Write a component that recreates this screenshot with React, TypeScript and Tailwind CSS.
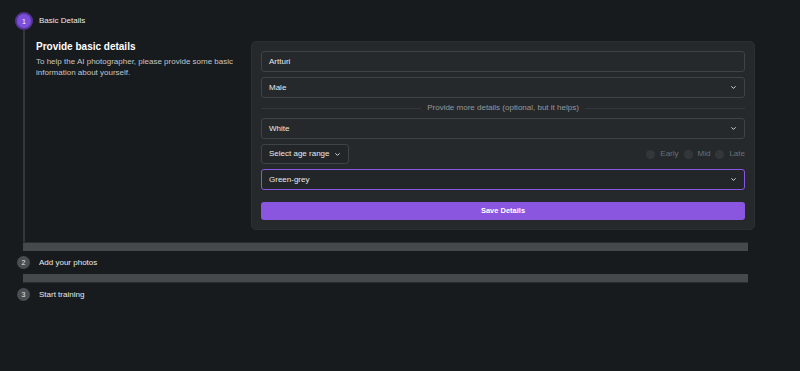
import React from "react";

function Chevron() {
  return (
    <svg width="5" height="3" viewBox="0 0 5 3" className="shrink-0">
      <polyline points="0.7,0.6 2.5,2.4 4.3,0.6" fill="none" stroke="#d6d8da" strokeWidth="1" strokeLinecap="round" strokeLinejoin="round" />
    </svg>
  );
}

function Radio({ label }: { label: string }) {
  return (
    <div className="flex items-center gap-[5px]">
      <div className="w-[9px] h-[9px] rounded-full bg-[#34373a]" />
      <span className="text-[8px] leading-none text-[#6c6f72]">{label}</span>
    </div>
  );
}

export default function App() {
  return (
    <div className="w-[800px] h-[371px] bg-[#181b1e] pt-[12px] font-['Liberation_Sans',Arial,sans-serif] text-[#e6e7e8] overflow-hidden">
      {/* Step 1 header */}
      <div className="flex items-center h-[18px] pl-[15px]">
        <div className="w-[18px] h-[18px] rounded-full bg-[#7b4fd9] border-2 border-[#553496] flex items-center justify-center text-[7px] text-white leading-none">
          1
        </div>
        <span className="ml-[6px] text-[8px] leading-none text-[#e8e9ea]">Basic Details</span>
      </div>

      {/* Step 1 content */}
      <div className="ml-[23px] border-l-2 border-[#33363a] pl-[11px] pt-[11px] pb-[12px] flex">
        <div className="w-[204px]">
          <div className="text-[10px] font-bold leading-[12px] text-white">Provide basic details</div>
          <div className="mt-[3px] text-[8px] leading-[11px] text-[#c3c5c7] w-[204px]">
            To help the AI photographer, please provide some basic information about yourself.
          </div>
        </div>
        <div className="ml-[11px] w-[504px] rounded-[5px] bg-[#26292c] border border-[#2c2f32] px-[9px] pt-[9px] pb-[9px] flex flex-col gap-[5px]">
          <div className="h-[21px] rounded-[3px] border border-[#404346] bg-[#26292c] flex items-center pl-[7px] text-[8px] text-[#e8e9ea]">
            Artturi
          </div>
          <div className="h-[21px] rounded-[3px] border border-[#404346] bg-[#26292c] flex items-center justify-between pl-[7px] pr-[8px] text-[8px] text-[#e8e9ea]">
            <span>Male</span>
            <Chevron />
          </div>
          <div className="h-[10px] flex items-center gap-[6px]">
            <div className="flex-1 h-px bg-[#33363a]" />
            <span className="text-[8px] leading-none text-[#95989b]">Provide more details (optional, but it helps)</span>
            <div className="flex-1 h-px bg-[#33363a]" />
          </div>
          <div className="h-[21px] rounded-[3px] border border-[#404346] bg-[#26292c] flex items-center justify-between pl-[7px] pr-[8px] text-[8px] text-[#e8e9ea]">
            <span>White</span>
            <Chevron />
          </div>
          <div className="h-[20px] flex items-center justify-between">
            <div className="h-[20px] w-[88px] rounded-[3px] border border-[#404346] bg-[#232629] flex items-center pl-[7px] gap-[5px] text-[8px] text-[#e8e9ea]">
              <span>Select age range</span>
              <Chevron />
            </div>
            <div className="flex items-center gap-[5px]">
              <Radio label="Early" />
              <Radio label="Mid" />
              <Radio label="Late" />
            </div>
          </div>
          <div className="h-[21px] rounded-[3px] border border-[#8a55e0] bg-[#232629] flex items-center justify-between pl-[7px] pr-[8px] text-[8px] text-[#e8e9ea]">
            <span>Green-grey</span>
            <Chevron />
          </div>
          <button className="mt-[7px] h-[18px] rounded-[3px] bg-[#8a55df] text-[7.5px] font-bold text-white flex items-center justify-center">
            Save Details
          </button>
        </div>
      </div>

      {/* Bar 1 */}
      <div className="ml-[23px] w-[725px] h-[9px] bg-[#45494c] border-t border-[#2b2e31]" />

      {/* Step 2 */}
      <div className="mt-[5px] flex items-center h-[13px] pl-[17px]">
        <div className="w-[13px] h-[13px] rounded-full bg-[#4a4d51] flex items-center justify-center text-[7px] leading-none text-[#e6e7e8]">
          2
        </div>
        <span className="ml-[9px] text-[8px] leading-none text-[#e8e9ea]">Add your photos</span>
      </div>

      {/* Bar 2 */}
      <div className="mt-[5px] ml-[23px] w-[725px] h-[9px] bg-[#45494c] border-b border-[#2b2e31]" />

      {/* Step 3 */}
      <div className="mt-[5px] flex items-center h-[13px] pl-[17px]">
        <div className="w-[13px] h-[13px] rounded-full bg-[#4a4d51] flex items-center justify-center text-[7px] leading-none text-[#e6e7e8]">
          3
        </div>
        <span className="ml-[9px] text-[8px] leading-none text-[#e8e9ea]">Start training</span>
      </div>
    </div>
  );
}
